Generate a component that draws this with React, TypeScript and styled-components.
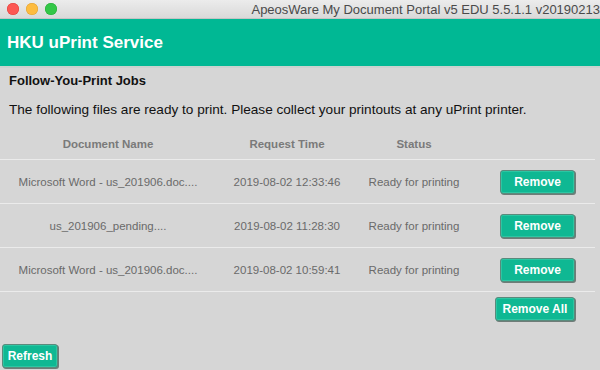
import React from "react";
import styled, { createGlobalStyle } from "styled-components";

const Global = createGlobalStyle`
  html, body { margin: 0; padding: 0; }
  body { width: 600px; height: 370px; overflow: hidden; background: #d6d6d6; font-family: "Liberation Sans", Arial, sans-serif; }
`;

const Window = styled.div`
  width: 600px;
  height: 370px;
  display: flex;
  flex-direction: column;
  background: #d6d6d6;
  overflow: hidden;
`;

const TitleBar = styled.div`
  height: 19px;
  flex: none;
  display: flex;
  align-items: center;
  background: linear-gradient(#ececec, #d9d9d9);
  border-bottom: 1px solid #c4c4c4;
  box-sizing: border-box;
  padding-left: 7px;
`;

const Lights = styled.div`
  display: flex;
  gap: 7px;
  flex: none;
`;

const Light = styled.span<{ $c: string; $b: string }>`
  width: 12px;
  height: 12px;
  border-radius: 50%;
  background: ${(p) => p.$c};
  box-shadow: inset 0 0 0 0.5px ${(p) => p.$b};
`;

const WindowTitle = styled.div`
  flex: 1;
  text-align: right;
  white-space: nowrap;
  overflow: hidden;
  font-size: 13px;
  color: #4a4a4a;
`;

const Header = styled.div`
  height: 47px;
  flex: none;
  background: #00b894;
  display: flex;
  align-items: center;
  padding-left: 7px;
  color: #fff;
  font-weight: bold;
  font-size: 17px;
  border-bottom: 2px solid #c9d3cf;
`;

const Body = styled.div`
  flex: 1;
  display: flex;
  flex-direction: column;
  padding-top: 4px;
`;

const SectionTitle = styled.div`
  padding-left: 9px;
  font-size: 13px;
  font-weight: bold;
  color: #111;
  height: 18px;
  line-height: 18px;
`;

const Intro = styled.div`
  padding-left: 9px;
  margin-top: 11px;
  font-size: 13.6px;
  color: #111;
  height: 18px;
  line-height: 18px;
  white-space: nowrap;
`;

const Table = styled.div`
  margin-top: 10px;
  width: 595px;
  display: flex;
  flex-direction: column;
`;

const Row = styled.div<{ $head?: boolean }>`
  display: grid;
  grid-template-columns: 216px 142px 112px 1fr;
  align-items: center;
  height: ${(p) => (p.$head ? "30px" : "43px")};
  border-bottom: 1px solid #ebebeb;
`;

const HeadCell = styled.div`
  text-align: center;
  font-size: 11.5px;
  font-weight: bold;
  color: #7a7a7a;
`;

const Cell = styled.div`
  text-align: center;
  font-size: 11.5px;
  color: #6a6a6a;
  white-space: nowrap;
`;

const ActionCell = styled.div`
  padding-left: 30px;
  display: flex;
`;

const Button = styled.button<{ $w: number }>`
  width: ${(p) => p.$w}px;
  height: 24px;
  box-sizing: border-box;
  background: #0fb893;
  color: #fff;
  font-family: "Liberation Sans", Arial, sans-serif;
  font-weight: bold;
  font-size: 12px;
  border: 1px solid #5a8a7c;
  border-radius: 3px;
  box-shadow: 1px 1px 0 #6f7c78, inset 0 0 0 1px #2cc6a3;
  padding: 0;
  cursor: pointer;
`;

const Footer = styled.div`
  width: 595px;
  display: flex;
  justify-content: flex-end;
  padding-top: 5px;
`;

const FooterInner = styled.div`
  padding-right: 20px;
`;

const Bottom = styled.div`
  margin-top: auto;
  padding: 0 0 2px 2px;
`;

const jobs = [
  { name: "Microsoft Word - us_201906.doc....", time: "2019-08-02 12:33:46" },
  { name: "us_201906_pending....", time: "2019-08-02 11:28:30" },
  { name: "Microsoft Word - us_201906.doc....", time: "2019-08-02 10:59:41" },
];

export default function App() {
  return (
    <Window>
      <Global />
      <TitleBar>
        <Lights>
          <Light $c="#fc5753" $b="#df3d39" />
          <Light $c="#fdbc40" $b="#de9f34" />
          <Light $c="#33c748" $b="#27aa35" />
        </Lights>
        <WindowTitle>ApeosWare My Document Portal v5 EDU 5.5.1.1 v20190213</WindowTitle>
      </TitleBar>
      <Header>HKU uPrint Service</Header>
      <Body>
        <SectionTitle>Follow-You-Print Jobs</SectionTitle>
        <Intro>The following files are ready to print. Please collect your printouts at any uPrint printer.</Intro>
        <Table>
          <Row $head>
            <HeadCell>Document Name</HeadCell>
            <HeadCell>Request Time</HeadCell>
            <HeadCell>Status</HeadCell>
            <div />
          </Row>
          {jobs.map((j, i) => (
            <Row key={i}>
              <Cell>{j.name}</Cell>
              <Cell>{j.time}</Cell>
              <Cell>Ready for printing</Cell>
              <ActionCell>
                <Button $w={75}>Remove</Button>
              </ActionCell>
            </Row>
          ))}
        </Table>
        <Footer>
          <FooterInner>
            <Button $w={80}>Remove All</Button>
          </FooterInner>
        </Footer>
        <Bottom>
          <Button $w={56}>Refresh</Button>
        </Bottom>
      </Body>
    </Window>
  );
}
